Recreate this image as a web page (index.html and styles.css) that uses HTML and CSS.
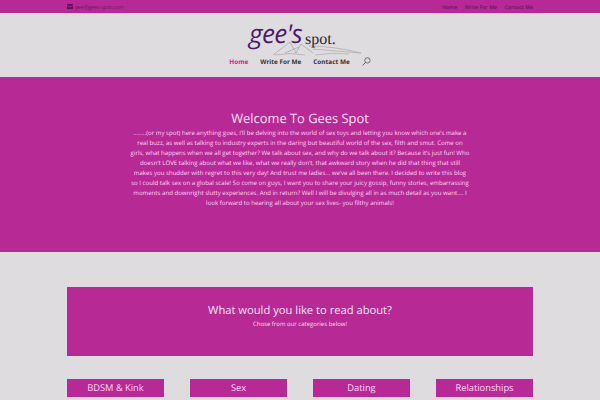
FILE: index.html
```html
<!DOCTYPE html>
<html lang="en">
<head>
<meta charset="utf-8">
<title>Gees Spot</title>
<link rel="stylesheet" href="styles.css">
</head>
<body>
<div class="topbar">
  <div class="wrap topbar-inner">
    <a class="mail">
      <svg class="mail-icon" viewBox="0 0 6 5" width="6" height="5"><path d="M0 0h6v1L3 2.6 0 1zM0 1.8l3 1.6 3-1.6V5H0z"/></svg>
      gee@gees-spot.com
    </a>
    <nav class="topnav"><a>Home</a><a>Write For Me</a><a>Contact Me</a></nav>
  </div>
</div>
<header class="header">
  <div class="logo">
    <svg class="logo-art" viewBox="0 0 120 20" width="120" height="20">
      <path d="M24 17 L41 4 L47 15 L52 6 L64 15 M36 15 L50 9" fill="none" stroke="#8d8a90" stroke-width=".5"/>
      <path d="M26 17 Q42 14 56 17 M60 8 Q84 8 112 15 Q86 13 64 11 M66 17 Q84 14 100 16" fill="none" stroke="#aaa7ab" stroke-width=".7"/>
    </svg>
    <span class="logo-gee">gee's</span><span class="logo-spot">spot.</span>
  </div>
  <nav class="mainnav">
    <a class="active">Home</a><a>Write For Me</a><a>Contact Me</a>
    <svg class="search" viewBox="0 0 9 9" width="9" height="9"><circle cx="5.4" cy="3.4" r="2.7" fill="none" stroke="#555" stroke-width=".8"/><path d="M3.5 5.4 L.8 8.4" stroke="#555" stroke-width=".9"/></svg>
  </nav>
</header>
<section class="hero">
  <h1>Welcome To Gees Spot</h1>
  <p>........(or my spot) here anything goes, I’ll be delving into the world of sex toys and letting you know which one’s make a<br>real buzz, as well as talking to industry experts in the daring but beautiful world of the sex, filth and smut. Come on<br>girls, what happens when we all get together? We talk about sex, and why do we talk about it? Because it’s just fun! Who<br>doesn’t LOVE talking about what we like, what we really don’t, that awkward story when he did that thing that still<br>makes you shudder with regret to this very day! And trust me ladies… we’ve all been there. I decided to write this blog<br>so I could talk sex on a global scale! So come on guys, I want you to share your juicy gossip, funny stories, embarrassing<br>moments and downright slutty experiences. And in return? Well I will be divulging all in as much detail as you want…. I<br>look forward to hearing all about your sex lives- you filthy animals!</p>
</section>
<main class="content">
  <section class="callout">
    <h2>What would you like to read about?</h2>
    <p>Chose from our categories below!</p>
  </section>
  <div class="cats">
    <a class="cat">BDSM &amp; Kink</a>
    <a class="cat">Sex</a>
    <a class="cat">Dating</a>
    <a class="cat">Relationships</a>
  </div>
</main>
</body>
</html>
```
FILE: styles.css
```css
* { box-sizing: border-box; }
html, body { margin: 0; height: 400px; overflow: hidden; }
body { background: #dfdce0; font-family: "Open Sans", sans-serif; color: #f7dcf0; text-rendering: geometricPrecision; }
.wrap { width: 466px; margin: 0 auto; }
.topbar { background: #b72a96; height: 13px; }
.topbar-inner { display: flex; justify-content: space-between; align-items: center; height: 13px; color: #6a1465; font-size: 5.2px; }
.mail { display: flex; align-items: center; gap: 2px; }
.mail-icon { fill: #5c1259; }
.topnav { display: flex; gap: 7.5px; font-weight: 600; }
.header { height: 64px; display: flex; flex-direction: column; align-items: center; background: #dfdce0; border-top: 1px solid #ecd7e8; border-bottom: 2px solid #e8d8e5; }
.logo { position: relative; height: 38px; width: 120px; left: 9px; }
.logo-art { position: absolute; left: 0; top: 24px; }
.logo-gee { position: absolute; left: 0; top: 2px; font-family: "Open Sans", sans-serif; font-style: italic; font-weight: 500; font-size: 26px; line-height: 34px; color: #4a1a6e; letter-spacing: -.6px; }
.logo-spot { position: absolute; left: 56px; top: 17px; font-family: "Liberation Serif", serif; font-size: 16px; line-height: 17px; color: #2c2730; }
.mainnav { display: flex; align-items: center; gap: 12px; font-size: 6.4px; font-weight: 700; color: #333; margin-top: 3px; height: 13px; }
.mainnav .active { color: #b72a96; }
.hero { background: #b72a96; height: 175px; text-align: center; padding-top: 31px; }
.hero h1 { margin: 0; font-size: 12.9px; font-weight: 400; line-height: 20px; color: #f7e0f1; }
.hero p { margin: 0 auto; width: 350px; font-size: 6.1px; line-height: 10px; }
.content { width: 466px; margin: 35px auto 0; }
.callout { background: #b72a96; height: 69px; text-align: center; padding-top: 16px; }
.callout h2 { margin: 0; font-size: 11.2px; font-weight: 400; line-height: 15px; color: #f7e0f1; }
.callout p { margin: 0; font-size: 6px; line-height: 13px; }
.cats { display: flex; justify-content: space-between; margin-top: 23px; }
.cat { width: 97px; height: 18px; background: #b72a96; text-align: center; font-size: 9.3px; line-height: 18px; }
```
